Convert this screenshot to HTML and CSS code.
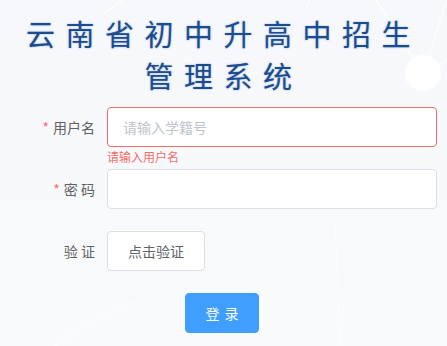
FILE: index.html
```html
<!DOCTYPE html>
<html lang="zh">
<head>
<meta charset="utf-8">
<link rel="stylesheet" href="styles.css">
</head>
<body>
<div class="page">
  <svg class="deco" width="447" height="346" viewBox="0 0 447 346" aria-hidden="true">
    <line x1="122" y1="0" x2="104" y2="14" stroke="#ffffff" stroke-width="1.2"/>
    <line x1="376" y1="0" x2="423" y2="73" stroke="#ffffff" stroke-width="1.2"/>
    <line x1="447" y1="0" x2="423" y2="73" stroke="#ffffff" stroke-width="1"/>
    <line x1="423" y1="73" x2="447" y2="60" stroke="#ffffff" stroke-width="1"/>
    <line x1="310" y1="0" x2="306" y2="10" stroke="#ffffff" stroke-width="1"/>
    <circle cx="423" cy="73" r="18" fill="#ffffff"/>
    <path d="M55 346 L95 318 L140 300" stroke="#ffffff" stroke-opacity="0.6" stroke-width="1.2" fill="none"/>
    <line x1="335" y1="220" x2="340" y2="346" stroke="#ffffff" stroke-opacity="0.6" stroke-width="1"/>
  </svg>
  <h1 class="title">云南省初中升高中招生<br>管理系统</h1>
  <form class="form">
    <div class="item">
      <label class="label"><span class="star">*</span>用户名</label>
      <div class="content">
        <div class="input error"><span class="ph">请输入学籍号</span></div>
        <div class="msg">请输入用户名</div>
      </div>
    </div>
    <div class="item">
      <label class="label"><span class="star">*</span>密 码</label>
      <div class="content">
        <div class="input"></div>
      </div>
    </div>
    <div class="item">
      <label class="label">验 证</label>
      <div class="content">
        <div class="btn">点击验证</div>
      </div>
    </div>
    <div class="submit">
      <div class="btn primary">登 录</div>
    </div>
  </form>
</div>
</body>
</html>
```

FILE: styles.css
```css
* { box-sizing: border-box; }
html, body {
  margin: 0;
  padding: 0;
  background: #f7f9fb;
}
body {
  font-family: "Noto Sans CJK SC", "Noto Sans", sans-serif;
  width: 447px;
  height: 346px;
  overflow: hidden;
}
.page {
  position: relative;
  width: 447px;
  height: 346px;
  background: linear-gradient(180deg, #f6f8fb 0%, #f8f9fb 60%, #f9fafc 100%);
}
.deco {
  position: absolute;
  left: 0;
  top: 0;
}
.title {
  position: relative;
  margin: 0;
  padding-top: 12px;
  text-align: center;
  font-size: 29px;
  line-height: 42px;
  font-weight: 400;
  letter-spacing: 10.5px;
  color: #1d4c8e;
  text-shadow: 0 0 2px rgba(70, 120, 200, 0.6), 0 0 5px rgba(255, 255, 255, 0.9);
}
.form {
  position: relative;
  margin-top: 11px;
  padding-right: 10px;
}
.item {
  display: flex;
  margin-bottom: 22px;
}
.label {
  width: 107px;
  padding-right: 12px;
  text-align: right;
  font-size: 14px;
  line-height: 40px;
  color: #606266;
  flex-shrink: 0;
}
.star {
  color: #f56c6c;
  margin-right: 4px;
}
.content {
  position: relative;
  flex: 1;
}
.input {
  height: 40px;
  border: 1px solid #dcdfe6;
  border-radius: 4px;
  background: #fff;
  padding: 0 15px;
  font-size: 14px;
  line-height: 38px;
}
.input.error {
  border-color: #f56c6c;
}
.ph {
  color: #c0c4cc;
}
.msg {
  position: absolute;
  top: 100%;
  left: 0;
  padding-top: 4px;
  font-size: 12px;
  line-height: 1;
  color: #f56c6c;
}
.btn {
  display: inline-block;
  height: 40px;
  padding: 0 20px;
  border: 1px solid #dcdfe6;
  border-radius: 4px;
  background: #fff;
  font-size: 14px;
  line-height: 38px;
  color: #606266;
}
.submit {
  display: flex;
  justify-content: center;
  padding-left: 7px;
}
.btn.primary {
  background: #409eff;
  border-color: #409eff;
  color: #fff;
  width: 74px;
  padding: 0;
  text-align: center;
  word-spacing: 2px;
}
```
